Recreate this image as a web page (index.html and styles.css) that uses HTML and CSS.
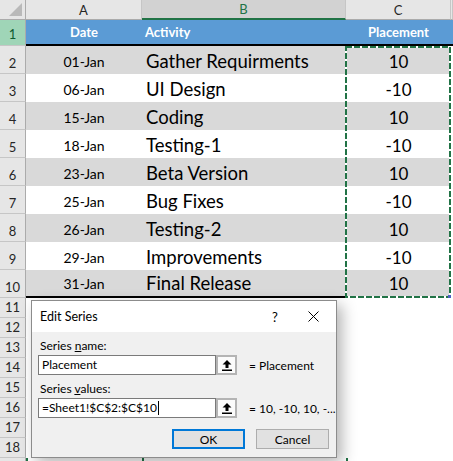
FILE: index.html
```html
<!DOCTYPE html>
<html>
<head>
<meta charset="utf-8">
<link rel="stylesheet" href="styles.css">
</head>
<body>
<div class="sheet">
  <div class="row hdr">
    <div class="corner"><span class="tri"></span></div>
    <div class="ch">A</div>
    <div class="ch sel">B</div>
    <div class="ch">C</div>
    <div class="ch"></div>
  </div>
  <div class="row r-title">
    <div class="rh sel">1</div>
    <div class="c t center">Date</div>
    <div class="c t">Activity</div>
    <div class="c t center">Placement</div>
    <div class="c t"></div>
  </div>
  <div class="row r-data grey"><div class="rh">2</div><div class="c d">01-Jan</div><div class="c a">Gather Requirments</div><div class="c v">10</div><div class="c x"></div></div>
  <div class="row r-data"><div class="rh">3</div><div class="c d">06-Jan</div><div class="c a">UI Design</div><div class="c v">-10</div><div class="c x"></div></div>
  <div class="row r-data grey"><div class="rh">4</div><div class="c d">15-Jan</div><div class="c a">Coding</div><div class="c v">10</div><div class="c x"></div></div>
  <div class="row r-data"><div class="rh">5</div><div class="c d">18-Jan</div><div class="c a">Testing-1</div><div class="c v">-10</div><div class="c x"></div></div>
  <div class="row r-data grey"><div class="rh">6</div><div class="c d">23-Jan</div><div class="c a">Beta Version</div><div class="c v">10</div><div class="c x"></div></div>
  <div class="row r-data"><div class="rh">7</div><div class="c d">25-Jan</div><div class="c a">Bug Fixes</div><div class="c v">-10</div><div class="c x"></div></div>
  <div class="row r-data grey"><div class="rh">8</div><div class="c d">26-Jan</div><div class="c a">Testing-2</div><div class="c v">10</div><div class="c x"></div></div>
  <div class="row r-data"><div class="rh">9</div><div class="c d">29-Jan</div><div class="c a">Improvements</div><div class="c v">-10</div><div class="c x"></div></div>
  <div class="row r-data grey last"><div class="rh">10</div><div class="c d">31-Jan</div><div class="c a">Final Release</div><div class="c v">10</div><div class="c x"></div></div>
  <div class="row r-empty"><div class="rh">11</div><div class="c"></div><div class="c"></div><div class="c"></div><div class="c"></div></div>
  <div class="row r-empty"><div class="rh">12</div><div class="c"></div><div class="c"></div><div class="c"></div><div class="c"></div></div>
  <div class="row r-empty"><div class="rh">13</div><div class="c"></div><div class="c"></div><div class="c"></div><div class="c"></div></div>
  <div class="row r-empty"><div class="rh">14</div><div class="c"></div><div class="c"></div><div class="c"></div><div class="c"></div></div>
  <div class="row r-empty"><div class="rh">15</div><div class="c"></div><div class="c"></div><div class="c"></div><div class="c"></div></div>
  <div class="row r-empty"><div class="rh">16</div><div class="c"></div><div class="c"></div><div class="c"></div><div class="c"></div></div>
  <div class="row r-empty"><div class="rh">17</div><div class="c"></div><div class="c"></div><div class="c"></div><div class="c"></div></div>
  <div class="row r-empty"><div class="rh">18</div><div class="c"></div><div class="c"></div><div class="c"></div><div class="c"></div></div>
  <div class="row r-empty tail"><div class="rh"></div><div class="c g"></div><div class="c g"></div><div class="c g"></div><div class="c"></div></div>
</div>

<svg class="ants" width="106" height="252" viewBox="0 0 106 252">
  <rect x="1" y="1" width="104" height="250" fill="none" stroke="#ffffff" stroke-width="2"/>
  <rect x="1" y="1" width="104" height="250" fill="none" stroke="#217346" stroke-width="2" stroke-dasharray="6 2"/>
  <rect x="103" y="249" width="3" height="3" fill="#4a5fc1"/>
</svg>

<div class="dialog">
  <div class="titlebar">
    <span class="dtitle">Edit Series</span>
    <span class="help">?</span>
    <span class="close"><svg width="11" height="11" viewBox="0 0 11 11"><path d="M0.5 0.5 L10.5 10.5 M10.5 0.5 L0.5 10.5" stroke="#000" stroke-width="1" fill="none"/></svg></span>
  </div>
  <div class="dbody">
    <div class="lbl">Series <u>n</u>ame:</div>
    <div class="field">
      <div class="inp">Placement</div>
      <div class="pick"><svg width="10" height="11" viewBox="0 0 10 11"><path d="M5 0 L9.5 4.5 L6.5 4.5 L6.5 8 L3.5 8 L3.5 4.5 L0.5 4.5 Z" fill="#000"/><rect x="0" y="9.5" width="10" height="1.5" fill="#000"/></svg></div>
      <div class="eq">= Placement</div>
    </div>
    <div class="lbl">Series <u>v</u>alues:</div>
    <div class="field">
      <div class="inp">=Sheet1!$C$2:$C$10<span class="caret"></span></div>
      <div class="pick"><svg width="10" height="11" viewBox="0 0 10 11"><path d="M5 0 L9.5 4.5 L6.5 4.5 L6.5 8 L3.5 8 L3.5 4.5 L0.5 4.5 Z" fill="#000"/><rect x="0" y="9.5" width="10" height="1.5" fill="#000"/></svg></div>
      <div class="eq">= 10, -10, 10, -...</div>
    </div>
    <div class="btns">
      <div class="btn ok">OK</div>
      <div class="btn">Cancel</div>
    </div>
  </div>
</div>
</body>
</html>
```

FILE: styles.css
```css
html, body {
  margin: 0;
  padding: 0;
  background: #ffffff;
}
body {
  width: 453px;
  height: 461px;
  overflow: hidden;
  position: relative;
}
.sheet {
  font-family: Lato, "Liberation Sans", sans-serif;
  color: #000;
}
.row {
  display: grid;
  grid-template-columns: 26px 116px 204px 105px 1fr;
}
.row > div {
  box-sizing: border-box;
  display: flex;
  align-items: center;
  white-space: nowrap;
}
.hdr { height: 20px; }
.r-title { height: 26px; }
.r-data { height: 28px; }
.r-empty { height: 20px; }

.corner {
  background: #e6e6e6;
  border-right: 1px solid #ababab;
  border-bottom: 1px solid #ababab;
  justify-content: flex-end;
  align-items: flex-end !important;
  padding: 0 3px 3px 0;
}
.tri {
  width: 13px;
  height: 13px;
  background: #b9b9b9;
  clip-path: polygon(100% 0, 100% 100%, 0 100%);
}
.ch {
  background: #e6e6e6;
  border-right: 1px solid #c6c6c6;
  border-bottom: 1px solid #ababab;
  justify-content: center;
  font-size: 13px;
  color: #262626;
}
.ch.sel {
  background: #d2d2d2;
  color: #217346;
  border-bottom: 2px solid #217346;
}
.rh {
  background: #e6e6e6;
  border-right: 1px solid #ababab;
  border-bottom: 1px solid #c6c6c6;
  justify-content: center;
  align-items: flex-end !important;
  padding-bottom: 2px;
  font-size: 13px;
  color: #262626;
}
.rh.sel {
  background: #9fd5b7;
  color: #0d5c30;
  align-items: center !important;
  padding-bottom: 0;
  padding-top: 2px;
}
.t {
  background: #5b9bd5;
  color: #ffffff;
  font-weight: bold;
  font-size: 13px;
  border-bottom: 2px solid #000;
  padding-left: 3px;
}
.t.center { justify-content: center; padding-left: 0; }

.r-data .c { background: #ffffff; padding-top: 2px; }
.r-data.grey .c { background: #d9d9d9; }
.r-data .c.x { background: #ffffff; }
.r-data.last .c { border-bottom: 2px solid #000; padding-top: 0; }
.r-data.last .c.x { border-bottom: none; }

.d { justify-content: center; font-size: 14px; }
.a { font-size: 18.5px; padding-left: 4px; }
.v { justify-content: center; font-size: 17px; }

.tail .g { border-left: 2px solid #217346; }

.ants {
  position: absolute;
  left: 345px;
  top: 46px;
  display: block;
}

.dialog {
  position: absolute;
  left: 31px;
  top: 300px;
  width: 306px;
  height: 158px;
  box-sizing: border-box;
  border: 1px solid #8c8c8c;
  background: #f0f0f0;
  box-shadow: 5px 5px 14px rgba(0, 0, 0, 0.3);
  font-family: Lato, "Noto Sans", sans-serif;
  font-size: 12px;
  color: #000;
  display: flex;
  flex-direction: column;
  white-space: nowrap;
}
.titlebar {
  height: 31px;
  background: #ffffff;
  display: flex;
  align-items: center;
  flex-shrink: 0;
}
.dtitle {
  padding-left: 8px;
  flex: 1;
  font-size: 12.5px;
}
.help {
  width: 30px;
  text-align: center;
  font-size: 13px;
}
.close {
  width: 46px;
  display: flex;
  justify-content: center;
  align-items: center;
}
.close svg { display: block; }
.dbody {
  padding: 5px 7px 8px 6px;
  display: flex;
  flex-direction: column;
}
.lbl {
  height: 18px;
  line-height: 18px;
  padding-left: 2px;
}
.field {
  display: flex;
  align-items: center;
  height: 20px;
}
.field + .lbl { margin-top: 5px; }
.inp {
  width: 178px;
  flex-shrink: 0;
  height: 20px;
  box-sizing: border-box;
  border: 1px solid #7a7a7a;
  background: #ffffff;
  padding-left: 3px;
  line-height: 18px;
  display: flex;
  align-items: center;
}
.caret {
  display: inline-block;
  width: 1px;
  height: 14px;
  background: #000;
  margin-left: 1px;
}
.pick {
  width: 21px;
  flex-shrink: 0;
  height: 20px;
  box-sizing: border-box;
  border: 2px solid #b4b4b4;
  background: #fbfbfb;
  display: flex;
  justify-content: center;
  align-items: center;
}
.pick svg { display: block; }
.eq {
  margin-left: 12px;
  white-space: nowrap;
}
.btns {
  margin-top: 11px;
  display: flex;
  justify-content: flex-end;
  gap: 11px;
}
.btn {
  width: 73px;
  height: 20px;
  box-sizing: border-box;
  border: 1px solid #adadad;
  background: #e1e1e1;
  display: flex;
  justify-content: center;
  align-items: center;
}
.btn.ok {
  border: 2px solid #0078d7;
}
```
